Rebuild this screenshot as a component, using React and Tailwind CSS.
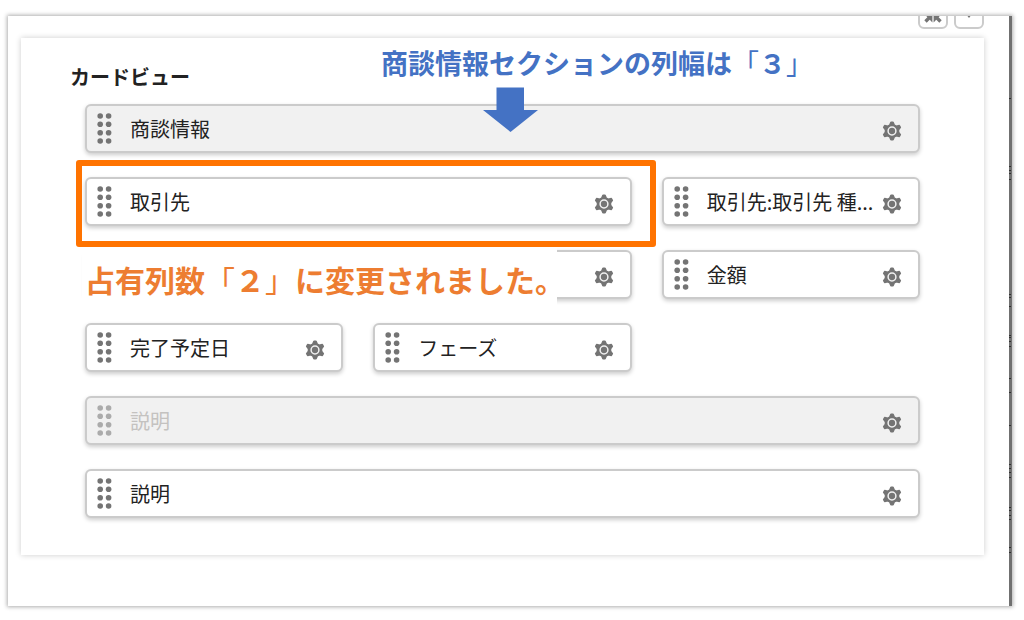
import React from "react";

const DOT_ROWS = [3, 11.3, 19.7, 28];

function DragHandle({ muted }) {
  return (
    <svg
      width="15"
      height="31"
      viewBox="0 0 15 31"
      aria-hidden="true"
      className={muted ? "shrink-0 fill-[#ababab]" : "shrink-0 fill-[#747474]"}
    >
      {DOT_ROWS.map((y) => (
        <g key={y}>
          <circle cx="3.2" cy={y} r="2.8" />
          <circle cx="11.6" cy={y} r="2.8" />
        </g>
      ))}
    </svg>
  );
}

function Gear() {
  return (
    <svg width="20" height="20" viewBox="0 0 20 20" aria-hidden="true">
      <path
        fill="#747474"
        stroke="#747474"
        strokeWidth="1.6"
        strokeLinejoin="round"
        fillRule="evenodd"
        d="M9 1.2H11L12.2 4.1L14.2 5.2L17.3 4.6L18.3 6.3L16.5 8.8V11.2L18.3 13.7L17.3 15.4L14.2 14.8L12.2 15.9L11 18.8H9L7.8 15.9L5.8 14.8L2.7 15.4L1.7 13.7L3.5 11.2V8.8L1.7 6.3L2.7 4.6L5.8 5.2L7.8 4.1Z"
      />
      <circle cx="10" cy="10" r="3.9" fill="none" stroke="#f1f1f1" strokeWidth="1.5" />
    </svg>
  );
}

function Field({ label, shaded, muted }) {
  return (
    <div
      className={
        "flex h-[49px] items-center rounded-md border-2 border-[#cbcbcb] pr-[16px] pl-[10px] shadow-[0_2px_4px_rgba(0,0,0,0.2)] " +
        (shaded ? "bg-[#f1f1f1]" : "bg-white")
      }
    >
      <DragHandle muted={muted} />
      <span
        className={
          "ml-[18px] min-w-0 flex-1 overflow-hidden text-[20px] leading-7 whitespace-nowrap " +
          (muted ? "text-[#c4c2c0]" : "text-[#222222]")
        }
      >
        {label}
      </span>
      <button type="button" aria-label="設定" className="mt-1 shrink-0">
        <Gear />
      </button>
    </div>
  );
}

function EdgeStrip() {
  const marks = [98, 166, 170, 173, 179, 294, 297, 306, 335, 337, 341, 346, 378, 392, 425, 464, 468, 472, 477, 507, 510, 515, 519, 547, 552];
  return (
    <svg className="w-[3px] shrink-0 self-stretch bg-[#707070]" aria-hidden="true">
      {marks.map((y) => (
        <rect key={y} x="0" y={y - 16} width="2" height="1" fill="#2f2f2f" />
      ))}
    </svg>
  );
}

export default function App() {
  return (
    <div className="min-h-[620px] bg-white pt-[16px] pr-[12px] pb-[14px] pl-[8px] font-['Noto_Sans_CJK_JP','Liberation_Sans',sans-serif]">
      <div className="flex shadow-[0_0_4px_1px_rgba(0,0,0,0.32)]">
        <main className="min-w-0 flex-1 pr-[25px] pb-[51px] pl-[13px]">
          <div className="mb-[9px] flex h-[13px] items-end justify-end gap-[6px] overflow-hidden">
            <button
              type="button"
              aria-label="縮小"
              className="flex h-[30px] w-[30px] shrink-0 items-center justify-center rounded-md border-2 border-[#cbcbcb]"
            >
              <svg width="18" height="18" viewBox="0 0 18 18" aria-hidden="true">
                <path
                  d="M1.5 16.5L7 11M16.5 16.5L11 11M1.5 1.5L7 7M16.5 1.5L11 7"
                  stroke="#747474"
                  strokeWidth="3.4"
                />
                <path d="M1 9.7H8.4V17.4ZM17 9.7H9.6V17.4ZM1 8.3H8.4V0.6ZM17 8.3H9.6V0.6Z" fill="#747474" />
              </svg>
            </button>
            <button
              type="button"
              aria-label="メニュー"
              className="flex h-[30px] w-[30px] shrink-0 items-center justify-center rounded-md border-2 border-[#cbcbcb]"
            >
              <svg width="12" height="8" viewBox="0 0 12 8" aria-hidden="true">
                <path d="M0 0H12L6 8Z" fill="#747474" />
              </svg>
            </button>
          </div>

          <section className="relative bg-white pt-[25px] pr-[64px] pb-[37px] pl-[64px] shadow-[0_0_6px_rgba(0,0,0,0.2)]">
            <h1 className="-ml-[15px] text-[20px] leading-[28px] font-bold text-[#222222]">カードビュー</h1>
            <div className="mt-[13px] grid grid-cols-3 gap-x-[30px] gap-y-[24px]">
              <div className="col-span-3">
                <Field label="商談情報" shaded />
              </div>
              <div className="relative col-span-2">
                <Field label="取引先" />
                <div className="pointer-events-none absolute -top-[17px] -right-[24px] -bottom-[21px] -left-[9px] rounded-[3px] border-6 border-[#ff7300]" />
              </div>
              <Field label="取引先:取引先 種..." />
              <div className="relative col-span-2">
                <Field label="" />
                <p className="absolute -top-[2px] -bottom-[6px] -left-[3px] w-[475px] bg-white pl-[3px] text-[30px] leading-[62px] font-bold whitespace-nowrap text-[#ed7d31]">
                  占有列数<span className="font-normal">「</span>２<span className="font-normal">」</span>に変更されました。
                </p>
              </div>
              <Field label="金額" />
              <Field label="完了予定日" />
              <Field label="フェーズ" />
              <div className="col-span-3">
                <Field label="説明" shaded muted />
              </div>
              <div className="col-span-3">
                <Field label="説明" />
              </div>
            </div>

            <div className="absolute top-[5px] left-[360px] text-[#4472c4]">
              <p className="text-[27px] leading-[40px] font-bold whitespace-nowrap">
                商談情報セクションの列幅は<span className="font-normal">「</span>３<span className="font-normal">」</span>
              </p>
              <svg width="56" height="45" viewBox="0 0 56 45" className="mt-[4px] ml-[102px]" aria-hidden="true">
                <path d="M13.5 0.5H41V23H55L27.5 45L0 23H13.5Z" fill="#4472c4" />
              </svg>
            </div>
          </section>
        </main>
        <EdgeStrip />
      </div>
    </div>
  );
}
